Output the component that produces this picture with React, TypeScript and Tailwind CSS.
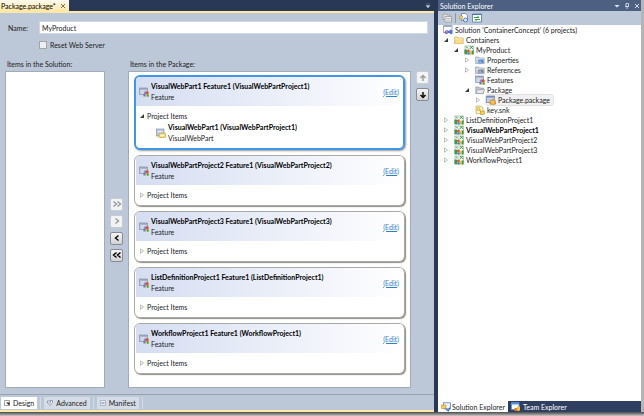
import { useState } from 'react';
import type { ReactNode } from 'react';

interface PackageItem {
  name: string;
  project: string;
  part?: string;
}

interface TreeNode {
  label: string;
  icon: ReactNode;
  level: number;
  arrow?: 'open' | 'closed';
  bold?: boolean;
  selected?: boolean;
}

/* Icons */
function FeatureIcon() {
  return (
    <svg viewBox="0 0 10 10" className="size-[10px] shrink-0">
      <rect x="0.5" y="1" width="8" height="6.5" fill="#c3ccd9" stroke="#8793a6" strokeWidth="0.7" />
      <rect x="0.5" y="1" width="8" height="1.5" fill="#8fa2bf" />
      <path d="M2 4h4M2 6h2" stroke="#eef2f8" strokeWidth="0.8" />
      <rect x="5" y="4.6" width="2.4" height="2.4" fill="#8f86d0" />
      <circle cx="8.2" cy="5.8" r="1.5" fill="#e0453a" />
      <rect x="4.4" y="7" width="2.4" height="2.4" fill="#4a80d8" />
      <rect x="6.4" y="7.2" width="1.8" height="2.4" fill="#f2b33b" />
      <rect x="8" y="7.4" width="1.8" height="2.2" fill="#43a047" />
    </svg>
  );
}

function PartIcon() {
  return (
    <svg viewBox="0 0 10 10" className="size-[10px] shrink-0">
      <rect x="0.5" y="1" width="7.5" height="7" fill="#b8c6da" stroke="#8b9cb6" strokeWidth="0.7" />
      <path d="M1.8 3.4h5M1.8 5h3" stroke="#f3f6fa" strokeWidth="0.8" />
      <rect x="3" y="5.2" width="6.4" height="4.2" fill="#f7df7b" stroke="#c69c2d" strokeWidth="0.6" />
      <path d="M4.4 7.4h3.6" stroke="#fff" strokeWidth="1" />
    </svg>
  );
}

function FolderIcon({ color, edge, mark }: { color: string; edge: string; mark?: string }) {
  return (
    <svg viewBox="0 0 10 10" className="size-[10px] shrink-0">
      <path d="M0.6 2h3l1 1h4.6v5.6H0.6z" fill={color} stroke={edge} strokeWidth="0.6" />
      <path d="M1 4h8" stroke="#fff" strokeOpacity="0.7" strokeWidth="0.7" />
      {mark && <rect x="3.4" y="4.6" width="5" height="3.6" fill={mark} />}
      {mark && <path d="M4.2 6h2M4.2 7.2h3" stroke="#fff" strokeWidth="0.5" />}
    </svg>
  );
}

function OpenFolderIcon() {
  return (
    <svg viewBox="0 0 10 10" className="size-[10px] shrink-0">
      <path d="M0.8 8.4V2h3l1 1h3.6v5.4z" fill="#c3c7cc" stroke="#858b93" strokeWidth="0.6" />
      <path d="M0.8 8.6L2.6 4.6h7L8 8.6z" fill="#e6e8eb" stroke="#858b93" strokeWidth="0.6" />
    </svg>
  );
}

function ProjectIcon() {
  return (
    <svg viewBox="0 0 10 10" className="size-[10px] shrink-0">
      <rect x="1" y="1" width="8.4" height="7.6" fill="#eef3ee" stroke="#8fa596" strokeWidth="0.6" />
      <path d="M2 1.6l1.800 1.800M5.600 4l3.200-2.800M6.400 1.200l2.400 2.600" stroke="#2f9a3a" strokeWidth="1" fill="none" />
      <path d="M0.4 4.6h2.6v4.8H0.4z" fill="#3d9a48" />
      <circle cx="4.4" cy="6" r="1.5" fill="#e2543b" />
      <rect x="3.4" y="7.4" width="2.4" height="2.2" fill="#3d7fd6" />
      <rect x="5.8" y="6" width="1.8" height="3.6" fill="#f2b53a" />
      <rect x="7.8" y="5.4" width="1.8" height="4.2" fill="#38a046" />
    </svg>
  );
}

function SolutionIcon() {
  return (
    <svg viewBox="0 0 10 10" className="size-[10px] shrink-0">
      <rect x="0.6" y="0.6" width="8.4" height="7" fill="#fff" stroke="#8a97ad" strokeWidth="0.8" />
      <rect x="0.6" y="0.6" width="8.4" height="1.4" fill="#9aabc6" />
      <path d="M2.600 6.400c1.200-1.200 2.400-.4 3.400.6s1.800 1.200 2.400 0-.8-2-2-.8-2.200 2.800-3.400 2.200-1-1.400-.4-2z" fill="none" stroke="#7b4fc0" strokeWidth="1.1" />
      <path d="M7.200 4.400l2.200 1v3.400l-2.200.8z" fill="#2f86d8" />
    </svg>
  );
}

function PackageIcon() {
  return (
    <svg viewBox="0 0 10 10" className="size-[10px] shrink-0">
      <rect x="0.5" y="1" width="8" height="6.6" fill="#c2cfe2" stroke="#71839f" strokeWidth="0.7" />
      <rect x="0.5" y="1" width="8" height="1.5" fill="#6f8bb8" />
      <path d="M4 6l2.800-1.400L9.600 6v3L6.800 9.800 4 9z" fill="#f0b23a" stroke="#b06f14" strokeWidth="0.6" />
      <path d="M4 6l2.800 1L9.600 6M6.800 7v2.800" stroke="#fbe0a0" strokeWidth="0.5" fill="none" />
    </svg>
  );
}

function KeyIcon() {
  return (
    <svg viewBox="0 0 10 10" className="size-[10px] shrink-0">
      <path d="M1 1h5l2 2v5.600H1z" fill="#fdf3c4" stroke="#b59a49" strokeWidth="0.6" />
      <circle cx="3.4" cy="4" r="1.5" fill="none" stroke="#d7a41c" strokeWidth="0.9" />
      <path d="M4.400 5l3 3M6.400 7l1-1" stroke="#d7a41c" strokeWidth="0.9" />
      <rect x="5.4" y="6" width="4" height="3.4" fill="#f5cf4b" stroke="#a98624" strokeWidth="0.5" />
    </svg>
  );
}

function ExplorerIcon() {
  return (
    <svg viewBox="0 0 10 10" className="size-[10px] shrink-0">
      <rect x="2.5" y="0.8" width="7" height="6" fill="#eef4fc" stroke="#5d82bb" strokeWidth="0.8" />
      <rect x="0.5" y="3" width="4.5" height="3.6" fill="#f6c95a" stroke="#b98a1f" strokeWidth="0.5" />
      <path d="M4.600 6.600l3 2.600M9 5.600L7.200 9" stroke="#2b6cc4" strokeWidth="1.2" />
    </svg>
  );
}

function TeamIcon() {
  return (
    <svg viewBox="0 0 10 10" className="size-[10px] shrink-0">
      <rect x="0.6" y="0.8" width="7.4" height="6.6" fill="#f4f7fb" stroke="#6c9be0" strokeWidth="0.8" />
      <rect x="0.6" y="0.8" width="7.4" height="1.6" fill="#4f8be0" />
      <path d="M3.600 6h2.600v3H3.600z" fill="#e8762c" />
      <path d="M6 4.600h3V8L7.500 9.600 6 8z" fill="#f6c33b" />
    </svg>
  );
}

function Expander({ state }: { state?: 'open' | 'closed' }) {
  return (
    <svg viewBox="0 0 6 6" className="size-[6px] shrink-0">
      {state === 'open' && <path d="M5 1v4H1z" fill="#3a3a3a" />}
      {state === 'closed' && (
        <path d="M1.500 0.800L4.500 3 1.500 5.200z" fill="#fff" stroke="#a3a3a3" strokeWidth="0.7" />
      )}
    </svg>
  );
}

function MoveButton({ label, path, disabled }: { label: string; path: string; disabled?: boolean }) {
  return (
    <button
      aria-label={label}
      disabled={disabled}
      className="flex size-[13px] items-center justify-center rounded-xs border border-[#868c97] bg-linear-to-b from-[#f5f5f5] to-[#d3d3d3] text-black disabled:border-[#c8ccd3] disabled:bg-none disabled:bg-[#f2f3f5] disabled:text-[#9a9a9a]"
    >
      <svg viewBox="0 0 10 10" className="size-[10px]">
        <path d={path} fill="none" stroke="currentColor" strokeWidth="1.4" />
      </svg>
    </button>
  );
}

const packageItems: PackageItem[] = [
  { name: 'VisualWebPart1 Feature1', project: 'VisualWebPartProject1', part: 'VisualWebPart1' },
  { name: 'VisualWebPartProject2 Feature1', project: 'VisualWebPartProject2' },
  { name: 'VisualWebPartProject3 Feature1', project: 'VisualWebPartProject3' },
  { name: 'ListDefinitionProject1 Feature1', project: 'ListDefinitionProject1' },
  { name: 'WorkflowProject1 Feature1', project: 'WorkflowProject1' },
];

const treeNodes: TreeNode[] = [
  { label: 'Containers', icon: <FolderIcon color="#f7dc8b" edge="#cfa548" />, level: 0, arrow: 'open' },
  { label: 'MyProduct', icon: <ProjectIcon />, level: 1, arrow: 'open' },
  { label: 'Properties', icon: <FolderIcon color="#c9d3e2" edge="#8493ab" mark="#4a7fcb" />, level: 2, arrow: 'closed' },
  { label: 'References', icon: <FolderIcon color="#c9ced6" edge="#8a919c" mark="#6c7f9b" />, level: 2, arrow: 'closed' },
  { label: 'Features', icon: <FeatureIcon />, level: 2 },
  { label: 'Package', icon: <OpenFolderIcon />, level: 2, arrow: 'open' },
  { label: 'Package.package', icon: <PackageIcon />, level: 3, arrow: 'closed', selected: true },
  { label: 'key.snk', icon: <KeyIcon />, level: 2 },
  { label: 'ListDefinitionProject1', icon: <ProjectIcon />, level: 0, arrow: 'closed' },
  { label: 'VisualWebPartProject1', icon: <ProjectIcon />, level: 0, arrow: 'closed', bold: true },
  { label: 'VisualWebPartProject2', icon: <ProjectIcon />, level: 0, arrow: 'closed' },
  { label: 'VisualWebPartProject3', icon: <ProjectIcon />, level: 0, arrow: 'closed' },
  { label: 'WorkflowProject1', icon: <ProjectIcon />, level: 0, arrow: 'closed' },
];

const indents = ['pl-[5px]', 'pl-[15px]', 'pl-[26px]', 'pl-[37px]'];

function FeatureCard({ item, active, onSelect }: { item: PackageItem; active: boolean; onSelect: () => void }) {
  return (
    <li
      onClick={onSelect}
      className={`overflow-hidden rounded-md bg-white ${
        active
          ? 'border-2 border-[#3f97e6] shadow-[1px_1px_2px_#9a9a9a]'
          : 'border border-[#aaaaa4] px-px shadow-[1px_1px_1px_#8f8f8a]'
      }`}
    >
      <div className="flex h-[29px] items-center gap-[2px] bg-linear-to-r from-[#d5ddf1] to-white pr-1 pl-[3px]">
        <FeatureIcon />
        <div className="min-w-0 flex-1 leading-[11px]">
          <h3 className="truncate font-bold text-black">
            {item.name} ({item.project})
          </h3>
          <p>Feature</p>
        </div>
        <a href="#edit" className="text-[#2f7fd3] underline">(Edit)</a>
      </div>
      <div className={`flex items-center gap-[2px] pl-[3px] ${item.part ? 'h-[16px] pt-1' : 'h-[20px]'}`}>
        <Expander state={item.part ? 'open' : 'closed'} />
        <span>Project Items</span>
      </div>
      {item.part && (
        <div className="flex items-center gap-[2px] pb-1 pl-5">
          <PartIcon />
          <div className="leading-[11px]">
            <h4 className="font-bold text-black">
              {item.part} ({item.project})
            </h4>
            <p>VisualWebPart</p>
          </div>
        </div>
      )}
    </li>
  );
}

export default function App() {
  const [name, setName] = useState('MyProduct');
  const [resetServer, setResetServer] = useState(false);
  const [selected, setSelected] = useState(0);

  return (
    <div className="flex h-screen flex-col bg-[#b5b5b5] font-['Lato','Noto_Sans',sans-serif] text-[7px] leading-[10px] text-[#1b1b1b]">
      <div className="mr-[3px] flex min-h-0 flex-1 bg-[#293955]">
        {/* Package designer */}
        <section className="flex min-w-0 flex-1 flex-col">
          <div className="flex h-[11px] items-center justify-between">
            <div className="flex h-full items-center gap-1 bg-linear-to-b from-[#fffaf0] to-[#ffe8a6] pr-[3px] pl-px text-black">
              <span>Package.package*</span>
              <button aria-label="Close">
                <svg viewBox="0 0 6 6" className="size-[6px]">
                  <path d="M1 1l4 4M5 1L1 5" stroke="#75633d" strokeWidth="0.9" />
                </svg>
              </button>
            </div>
            <button aria-label="Open documents" className="pr-[3px]">
              <svg viewBox="0 0 6 6" className="size-[6px]">
                <path d="M1 1h4M1 2.500h4L3 5z" fill="#ced4df" stroke="#ced4df" strokeWidth="0.3" />
              </svg>
            </button>
          </div>
          <div className="flex min-h-0 flex-1 flex-col border-y-2 border-[#ffe8a6] bg-[#bcc7d8]">
            <div className="flex items-center pt-2 pr-[6px] pl-2">
              <label htmlFor="name" className="w-[31px]">Name:</label>
              <input
                id="name"
                value={name}
                onChange={e => setName(e.target.value)}
                className="h-[13px] min-w-0 flex-1 border border-[#d0d7e2] bg-white px-[2px] outline-none"
              />
            </div>
            <label className="mt-[6px] ml-[39px] flex items-center gap-[3px]">
              <input
                type="checkbox"
                checked={resetServer}
                onChange={e => setResetServer(e.target.checked)}
                className="size-2 appearance-none border border-[#a3a5a8] bg-[#eceef0] checked:bg-[#3b6fb5]"
              />
              Reset Web Server
            </label>
            <div className="mt-[9px] flex min-h-0 flex-1 gap-[5px] pr-[5px] pb-[6px] pl-[5px]">
              <div className="flex w-[100px] flex-col">
                <h2 className="h-3 pl-[2px]">Items in the Solution:</h2>
                <div className="flex-1 border border-[#a3abb8] bg-white" />
              </div>
              <div className="flex flex-col justify-center gap-1 pt-3">
                <MoveButton label="Add all" path="M1.500 2.500L4.500 5l-3 2.500M5.500 2.500L8.500 5l-3 2.500" disabled />
                <MoveButton label="Add" path="M3.500 2.500L6.500 5l-3 2.500" disabled />
                <MoveButton label="Remove" path="M6.500 2.500L3.500 5l3 2.500" />
                <MoveButton label="Remove all" path="M4.500 2.500L1.500 5l3 2.500M8.500 2.500L5.500 5l3 2.500" />
              </div>
              <div className="flex min-w-0 flex-1 flex-col">
                <h2 className="h-3 pl-[2px]">Items in the Package:</h2>
                <ul className="flex min-h-0 flex-1 flex-col gap-[5px] overflow-hidden border border-[#a3abb8] bg-white px-[5px] py-[3px]">
                  {packageItems.map((item, i) => (
                    <FeatureCard
                      key={item.name}
                      item={item}
                      active={i === selected}
                      onSelect={() => setSelected(i)}
                    />
                  ))}
                </ul>
              </div>
              <div className="flex flex-col gap-1 pt-3">
                <MoveButton label="Move up" path="M5 8V2.500M2.500 5L5 2.500 7.500 5" disabled />
                <MoveButton label="Move down" path="M5 2v5.500M2.500 5L5 7.500 7.500 5" />
              </div>
            </div>
            {/* View tabs */}
            <div className="flex h-4 items-center gap-[3px] border-t border-[#99a2b2] pl-px">
              <button className="flex h-[12px] items-center gap-[3px] bg-white px-[3px]">
                <svg viewBox="0 0 6 6" className="size-[6px]">
                  <path d="M0.500 0.500h5v5h-5z" fill="#fff" stroke="#777" strokeWidth="0.7" />
                  <path d="M2 2.500h3.500v3z" fill="#222" />
                </svg>
                Design
              </button>
              <span className="h-[12px] w-px bg-[#d5dce7]" />
              <button className="flex h-[12px] items-center gap-[3px] bg-[#d6dce6] px-[3px]">
                <svg viewBox="0 0 6 6" className="size-[6px]">
                  <path d="M0.500 1h3v2h-3zM3 0.500h2.500v2L3 5.500 1.500 4" fill="#fff" stroke="#6d7f9c" strokeWidth="0.7" />
                </svg>
                Advanced
              </button>
              <span className="h-[12px] w-px bg-[#d5dce7]" />
              <button className="flex h-[12px] items-center gap-[3px] bg-[#d6dce6] px-[3px]">
                <svg viewBox="0 0 6 6" className="size-[6px]">
                  <path d="M0.500 0.500h5v5h-5z" fill="#e9edf4" stroke="#8b98ad" strokeWidth="0.6" />
                  <path d="M1.500 3h3" stroke="#4a5f85" strokeWidth="0.8" />
                </svg>
                Manifest
              </button>
              <span className="h-[12px] w-px bg-[#d5dce7]" />
            </div>
          </div>
        </section>

        {/* Solution explorer */}
        <aside className="ml-1 flex w-[203px] flex-col">
          <header className="flex h-[11px] items-center gap-1 bg-[#4d6082] pr-px pl-[2px] text-white">
            <h2 className="flex-1">Solution Explorer</h2>
            <svg viewBox="0 0 6 6" className="size-[6px]"><path d="M0.500 2h5L3 4.500z" fill="#e4e8ef" /></svg>
            <svg viewBox="0 0 6 6" className="size-[6px]">
              <path d="M2 0.500h2.500v3M2 0.500v3M1 3.500h4M3 3.500V6" fill="none" stroke="#e4e8ef" strokeWidth="0.8" />
            </svg>
            <svg viewBox="0 0 6 6" className="size-[6px]">
              <path d="M1 1l4 4M5 1L1 5" stroke="#e4e8ef" strokeWidth="0.9" />
            </svg>
          </header>
          <div className="flex h-[14px] items-center gap-[3px] bg-[#bcc7d8] pl-1">
            <button aria-label="Properties">
              <svg viewBox="0 0 10 10" className="size-[10px]">
                <path d="M1 1h3l1 1h3v4.500H1z" fill="#e3e1d8" stroke="#8d929b" strokeWidth="0.7" />
                <path d="M3 3.500h6.500V9H3z" fill="#f1efe8" stroke="#8d929b" strokeWidth="0.7" />
                <path d="M4 5.500h4.500M4 7.200h4.500" stroke="#a9adb5" strokeWidth="0.7" />
              </svg>
            </button>
            <span className="h-[10px] w-px bg-[#8c98ac]" />
            <button aria-label="Show all files">
              <svg viewBox="0 0 10 10" className="size-[10px]">
                <path d="M2.500 0.500h4l2 2v5h-6z" fill="#fff" stroke="#5b6f92" strokeWidth="0.7" />
                <path d="M0.500 3h3v3h-3z" fill="#f6d478" stroke="#a8842d" strokeWidth="0.5" />
                <circle cx="6.5" cy="7" r="2" fill="#dbe9fa" stroke="#3f6cab" strokeWidth="0.8" />
              </svg>
            </button>
            <button aria-label="Refresh">
              <svg viewBox="0 0 10 10" className="size-[10px]">
                <path d="M0.500 1h9v8h-9z" fill="#fff" stroke="#4a78b5" strokeWidth="0.8" />
                <path d="M0.500 1.500h9" stroke="#4a78b5" />
                <path d="M2 4.500h5L5.500 3M8 6.500H3L4.500 8" fill="none" stroke="#3c9a3f" strokeWidth="1" />
              </svg>
            </button>
          </div>
          <ul className="min-h-0 flex-1 overflow-hidden bg-white">
            <li className="flex h-[10px] items-center gap-[2px] pl-[5px]">
              <SolutionIcon />
              Solution 'ContainerConcept' (6 projects)
            </li>
            {treeNodes.map(node => (
              <li key={node.label} className={`flex h-[10px] items-center gap-[5px] ${indents[node.level]}`}>
                <Expander state={node.arrow} />
                <span
                  className={`flex items-center gap-[2px] pr-[3px] ${node.bold ? 'font-bold text-black' : ''} ${
                    node.selected ? 'rounded-xs bg-[#f0f0f0] outline outline-[#e2e2e2]' : ''
                  }`}
                >
                  {node.icon}
                  {node.label}
                </span>
              </li>
            ))}
          </ul>
          <nav className="flex h-[11px] items-center bg-[#2f3f62]">
            <button className="flex h-full items-center gap-px bg-white pr-[3px] pl-[3px]">
              <ExplorerIcon />
              Solution Explorer
            </button>
            <button className="flex h-full items-center gap-[2px] pr-[3px] pl-[3px] text-white">
              <TeamIcon />
              Team Explorer
            </button>
          </nav>
        </aside>
      </div>
      <div className="h-[4px] bg-linear-to-b from-[#4a4a4a] to-[#c9c9c9]" />
    </div>
  );
}
